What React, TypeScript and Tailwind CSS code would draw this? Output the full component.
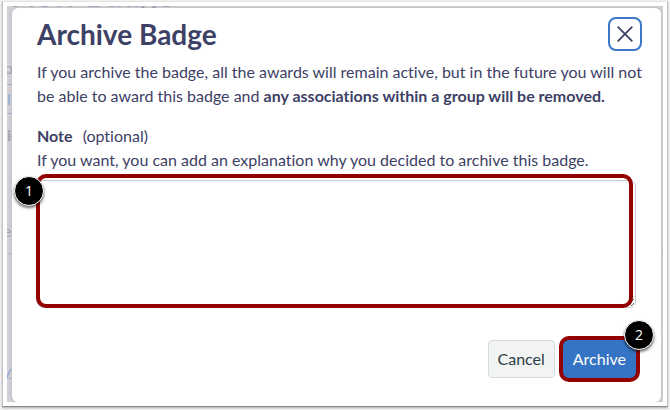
import { useState, type ReactNode } from "react";

function StepMarker({ children, className }: { children: ReactNode; className: string }) {
  return (
    <span
      className={`pointer-events-none absolute flex size-[30px] items-center justify-center rounded-full border border-white bg-black font-['Open_Sans',sans-serif] text-sm text-white shadow-[0_2px_3px_rgba(0,0,0,0.6)] ${className}`}
    >
      {children}
    </span>
  );
}

// The badge page that shows round the edges of the dialog
function PageBehind() {
  return (
    <div aria-hidden="true" className="absolute inset-0 select-none text-base text-[#a3a5b3]">
      <p className="absolute -top-[31px] left-1 text-[32px] leading-10 font-bold text-[#a9abbc]">New Badge</p>
      <p className="absolute top-[50px] -left-[3px] leading-6">o</p>
      <div className="absolute top-[78px] h-[30px] w-2 border-y border-[#9db3d6]" />
      <p className="absolute top-[81px] left-0 leading-6 text-[#8dabd9]">l</p>
      <p className="absolute top-[117px] left-0 leading-6 font-bold">ic</p>
      <p className="absolute top-[213px] -left-1 leading-6">e</p>
      <div className="absolute top-[247px] w-full border-t border-[#bcbcc4]" />
      <p className="absolute top-[353px] -left-1 leading-6 text-[#8dabd9] underline">y</p>
    </div>
  );
}

export default function App() {
  const [note, setNote] = useState("");

  return (
    <div className="flex min-h-screen bg-[#f4f4f4] px-0.5 pt-px pb-[3px] font-[Lato,sans-serif] text-[#3d4165] [font-variant-ligatures:none]">
      <div className="flex grow border border-[#c4c4c4] border-t-[#e4e4e4] border-b-[#8a8a8a] bg-white p-1 shadow-[0_1px_2px_rgba(0,0,0,0.3)]">
        <div className="relative flex grow overflow-hidden bg-[#d0d0d6] pt-0.5 pr-0.5 pl-[5px]">
          <PageBehind />
          <section
            role="dialog"
            aria-labelledby="dialog-title"
            className="relative flex grow flex-col rounded-md bg-white px-[25px] pt-2 pb-5 shadow-[0_0_4px_rgba(0,0,0,0.12)]"
          >
            <header className="flex items-center justify-between">
              <h1 id="dialog-title" className="text-[28px] leading-9 font-bold">
                Archive Badge
              </h1>
              <button
                type="button"
                aria-label="Close"
                className="-mr-1.5 flex size-[34px] items-center justify-center rounded-lg border-2 border-[#3a78c8]"
              >
                <svg viewBox="0 0 16 16" className="size-4" fill="none" stroke="currentColor" strokeWidth="1.8" strokeLinecap="round">
                  <path d="M1.2 1.2l13.6 13.6M14.8 1.2L1.2 14.8" />
                </svg>
              </button>
            </header>

            <p className="mt-2 -mr-2 text-base leading-6">
              If you archive the badge, all the awards will remain active, but in the future you will not be able to award this badge and{" "}
              <strong className="font-bold">any associations within a group will be removed.</strong>
            </p>

            <label htmlFor="note" className="mt-4 text-base leading-6">
              <strong className="mr-1.5 font-bold">Note</strong> (optional)
              <br />
              If you want, you can add an explanation why you decided to archive this badge.
            </label>

            <div className="relative mt-2">
              <textarea
                id="note"
                value={note}
                onChange={(e) => setNote(e.target.value)}
                className="block h-32 w-full resize rounded-md border border-[#c9cbd1] px-3 py-2 text-base outline-none"
              />
              <div className="pointer-events-none absolute -top-1.5 right-[3px] bottom-0 -left-px rounded-[10px] border-4 border-[#930000]" />
              <StepMarker className="-top-1 -left-[23px]">1</StepMarker>
            </div>

            <footer className="mt-7 -mr-1 flex items-center justify-end gap-1">
              <button
                type="button"
                className="h-[38px] rounded-sm border border-[#d6dadb] bg-[#f2f4f4] px-[9px] text-base text-[#2d3b45]"
              >
                Cancel
              </button>
              <div className="relative">
                <button
                  type="button"
                  className="block h-[46px] rounded-[10px] border-4 border-[#930000] bg-[#3573c4] px-2.5 text-base text-white"
                >
                  Archive
                </button>
                <StepMarker className="-top-4 -right-3.5">2</StepMarker>
              </div>
            </footer>
          </section>
        </div>
      </div>
    </div>
  );
}
